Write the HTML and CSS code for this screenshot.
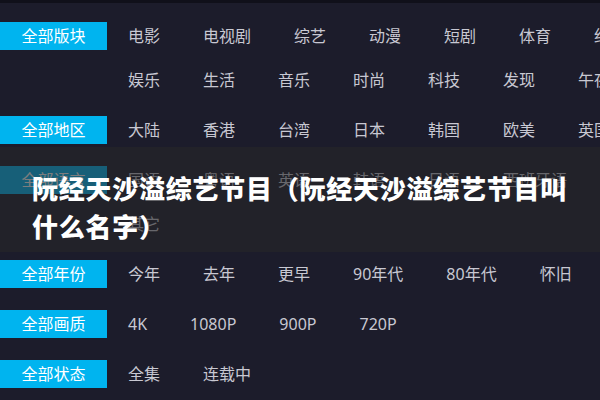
FILE: index.html
```html
<!DOCTYPE html>
<html lang="zh-CN">
<head>
<meta charset="utf-8">
<title>阮经天沙溢综艺节目</title>
<link rel="stylesheet" href="styles.css">
</head>
<body>
<div class="page">
  <div class="topbar"></div>
  <div class="filters">
    <div class="group">
      <div class="label">全部版块</div>
      <ul class="items">
        <li>电影</li><li>电视剧</li><li>综艺</li><li>动漫</li><li>短剧</li><li>体育</li><li>纪录</li>
        <li>娱乐</li><li>生活</li><li>音乐</li><li>时尚</li><li>科技</li><li>发现</li><li>午夜</li>
      </ul>
    </div>
    <div class="group">
      <div class="label">全部地区</div>
      <ul class="items">
        <li>大陆</li><li>香港</li><li>台湾</li><li>日本</li><li>韩国</li><li>欧美</li><li>英国</li>
      </ul>
    </div>
    <div class="group">
      <div class="label">全部语言</div>
      <ul class="items">
        <li>国语</li><li>粤语</li><li>英语</li><li>韩语</li><li>日语</li><li>西班牙语</li><li>其它</li>
      </ul>
    </div>
    <div class="group">
      <div class="label">全部年份</div>
      <ul class="items">
        <li>今年</li><li>去年</li><li>更早</li><li>90年代</li><li>80年代</li><li>怀旧</li>
      </ul>
    </div>
    <div class="group">
      <div class="label">全部画质</div>
      <ul class="items">
        <li>4K</li><li>1080P</li><li>900P</li><li>720P</li>
      </ul>
    </div>
    <div class="group">
      <div class="label">全部状态</div>
      <ul class="items">
        <li>全集</li><li>连载中</li>
      </ul>
    </div>
  </div>
  <div class="overlay">
    <h1 class="title">阮经天沙溢综艺节目（阮经天沙溢综艺节目叫什么名字）</h1>
  </div>
</div>
</body>
</html>
```
FILE: styles.css
```css
html, body {
  margin: 0;
  padding: 0;
  background: #1c1c2b;
  overflow: hidden;
}
.page {
  position: relative;
  width: 600px;
  height: 400px;
  overflow: hidden;
  background: #1c1c2b;
  font-family: "Noto Sans", "Noto Sans CJK SC", sans-serif;
}
.topbar {
  height: 3px;
  background: #10101a;
}
.filters {
  padding-top: 11px;
}
.group {
  display: flex;
  align-items: flex-start;
  margin-bottom: 6px;
}
.label {
  flex: none;
  width: 107px;
  height: 28px;
  margin-top: 8px;
  margin-right: 21px;
  background: #00b4ef;
  color: #ffffff;
  font-size: 16px;
  line-height: 28px;
  text-align: center;
}
.items {
  flex: none;
  width: 507px;
  margin: 0;
  padding: 0;
  list-style: none;
  display: flex;
  flex-wrap: wrap;
  column-gap: 43px;
}
.items li {
  height: 44px;
  line-height: 44px;
  font-size: 16px;
  color: #c8c8d2;
  white-space: nowrap;
}
.overlay {
  position: absolute;
  left: 0;
  top: 147px;
  width: 600px;
  height: 105px;
  box-sizing: border-box;
  padding: 22px 30px 0 32px;
  background: rgba(38, 38, 40, 0.6);
}
.title {
  margin: 0;
  color: #ffffff;
  font-family: "Noto Sans CJK SC", sans-serif;
  font-weight: 900;
  font-size: 26px;
  letter-spacing: 0.75px;
  line-height: 38px;
}
```
